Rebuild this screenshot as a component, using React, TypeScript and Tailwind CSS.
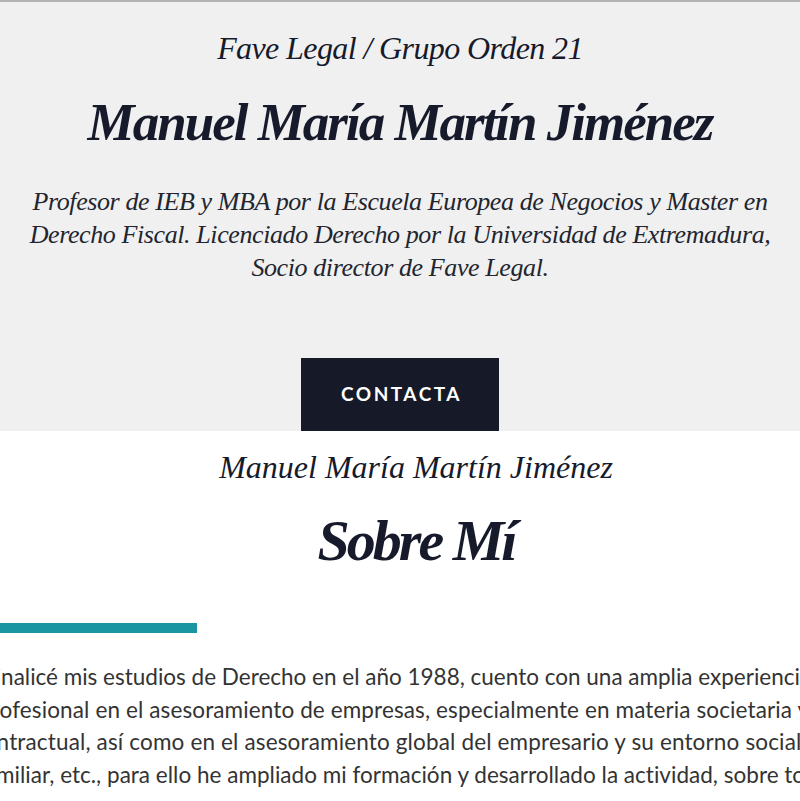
export default function App() {
  const serif = "font-['Liberation_Serif','DejaVu_Serif',serif] italic";
  const body = "block whitespace-nowrap";

  return (
    <div className="h-[801px] w-full overflow-hidden bg-white">
      {/* cabecera gris */}
      <section className="border-t-2 border-[#b3b3b3] bg-[#f0f0f0] pt-[26px] text-center text-[#161a2b]">
        <p className={`${serif} text-[32px] leading-[40px] tracking-[-0.6px]`}>Fave Legal / Grupo Orden 21</p>
        <h1 className={`${serif} mt-[24px] text-[53px] font-bold leading-[60px] tracking-[-2px]`}>
          Manuel María Martín Jiménez
        </h1>
        <p className={`${serif} mx-auto mt-[33px] max-w-[780px] text-[26px] leading-[33px] tracking-[-0.4px] text-[#22252f]`}>
          Profesor de IEB y MBA por la Escuela Europea de Negocios y Master en
          <br />
          Derecho Fiscal. Licenciado Derecho por la Universidad de Extremadura,
          <br />
          Socio director de Fave Legal.
        </p>
        <div className="mt-[74px] flex justify-center">
          <button className="flex h-[73px] w-[198px] items-center justify-center bg-[#161a28] pl-[3px] font-['Lato',sans-serif] text-[19px] font-bold tracking-[2.5px] text-white">
            CONTACTA
          </button>
        </div>
      </section>

      {/* sobre mí */}
      <section className="pl-[32px] pt-[16px] text-center text-[#161a2b]">
        <p className={`${serif} text-[32px] leading-[40px]`}>Manuel María Martín Jiménez</p>
        <h2 className={`${serif} mt-[22px] text-[58px] font-bold leading-[64px] tracking-[-3px]`}>Sobre Mí</h2>
      </section>

      <div className="mt-[50px] h-[10px] w-[197px] bg-[#1996a1]" />

      <p className="mt-[28px] font-['Lato',sans-serif] text-[22.5px] leading-[32.7px] text-[#333333]">
        <span className={`${body} ml-[-17px]`}>
          Finalicé mis estudios de Derecho en el año 1988, cuento con una amplia experiencia
        </span>
        <span className={`${body} ml-[-21px] tracking-[0.12px]`}>
          profesional en el asesoramiento de empresas, especialmente en materia societaria y
        </span>
        <span className={`${body} ml-[-27px] tracking-[0.15px]`}>
          contractual, así como en el asesoramiento global del empresario y su entorno social,
        </span>
        <span className={`${body} ml-[-23px] tracking-[0.02px]`}>
          familiar, etc., para ello he ampliado mi formación y desarrollado la actividad, sobre todo
        </span>
      </p>
    </div>
  );
}
